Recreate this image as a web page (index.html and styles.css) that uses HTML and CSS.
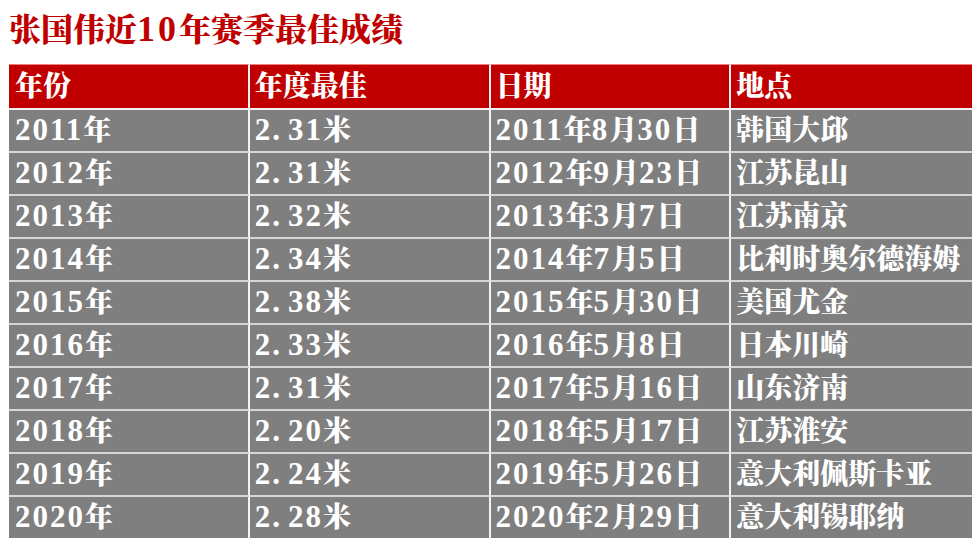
FILE: index.html
```html
<!DOCTYPE html>
<html lang="zh-CN">
<head>
<meta charset="utf-8">
<link rel="stylesheet" href="styles.css">
</head>
<body>
<h1 class="title">张国伟近<span class="tn">10</span>年赛季最佳成绩</h1>
<table class="grid">
  <thead>
    <tr><th>年份</th><th>年度最佳</th><th>日期</th><th>地点</th></tr>
  </thead>
  <tbody>
    <tr><td><span class="n">2011</span>年</td><td><span class="n">2<span class="dot">.</span>31</span>米</td><td><span class="n">2011</span>年<span class="n">8</span>月<span class="n">30</span>日</td><td>韩国大邱</td></tr>
    <tr><td><span class="n">2012</span>年</td><td><span class="n">2<span class="dot">.</span>31</span>米</td><td><span class="n">2012</span>年<span class="n">9</span>月<span class="n">23</span>日</td><td>江苏昆山</td></tr>
    <tr><td><span class="n">2013</span>年</td><td><span class="n">2<span class="dot">.</span>32</span>米</td><td><span class="n">2013</span>年<span class="n">3</span>月<span class="n">7</span>日</td><td>江苏南京</td></tr>
    <tr><td><span class="n">2014</span>年</td><td><span class="n">2<span class="dot">.</span>34</span>米</td><td><span class="n">2014</span>年<span class="n">7</span>月<span class="n">5</span>日</td><td>比利时奥尔德海姆</td></tr>
    <tr><td><span class="n">2015</span>年</td><td><span class="n">2<span class="dot">.</span>38</span>米</td><td><span class="n">2015</span>年<span class="n">5</span>月<span class="n">30</span>日</td><td>美国尤金</td></tr>
    <tr><td><span class="n">2016</span>年</td><td><span class="n">2<span class="dot">.</span>33</span>米</td><td><span class="n">2016</span>年<span class="n">5</span>月<span class="n">8</span>日</td><td>日本川崎</td></tr>
    <tr><td><span class="n">2017</span>年</td><td><span class="n">2<span class="dot">.</span>31</span>米</td><td><span class="n">2017</span>年<span class="n">5</span>月<span class="n">16</span>日</td><td>山东济南</td></tr>
    <tr><td><span class="n">2018</span>年</td><td><span class="n">2<span class="dot">.</span>20</span>米</td><td><span class="n">2018</span>年<span class="n">5</span>月<span class="n">17</span>日</td><td>江苏淮安</td></tr>
    <tr><td><span class="n">2019</span>年</td><td><span class="n">2<span class="dot">.</span>24</span>米</td><td><span class="n">2019</span>年<span class="n">5</span>月<span class="n">26</span>日</td><td>意大利佩斯卡亚</td></tr>
    <tr><td><span class="n">2020</span>年</td><td><span class="n">2<span class="dot">.</span>28</span>米</td><td><span class="n">2020</span>年<span class="n">2</span>月<span class="n">29</span>日</td><td>意大利锡耶纳</td></tr>
  </tbody>
</table>
</body>
</html>
```
FILE: styles.css
```css
html, body {
  margin: 0;
  padding: 0;
  background: #ffffff;
}
body {
  font-family: "Liberation Serif", "Noto Serif CJK SC", "Noto Sans CJK SC", serif;
}
.title {
  margin: 0;
  padding: 9px 0 0 9px;
  height: 64px;
  box-sizing: border-box;
  font-size: 32px;
  line-height: 40px;
  font-weight: 900;
  color: #c00000;
  white-space: nowrap;
}
.tn {
  font-size: 36px;
  letter-spacing: 3px;
}
.grid {
  margin-left: 9px;
  width: 963px;
  border-collapse: separate;
  border-spacing: 0;
  table-layout: fixed;
}
.grid th, .grid td {
  box-sizing: border-box;
  padding: 0 0 0 5px;
  text-align: left;
  font-weight: 900;
  color: #ffffff;
  font-size: 28px;
  white-space: nowrap;
  vertical-align: middle;
  border-right: 2px solid #f2f2f2;
}
.grid th:first-child, .grid td:first-child {
  padding-left: 6px;
}
.grid th:last-child, .grid td:last-child {
  border-right: none;
}
.grid th {
  background: #c00000;
  height: 46px;
  border-top: 1px solid #f08080;
  border-bottom: 2px solid #f2f2f2;
  line-height: 40px;
}
.grid td {
  background: #7f7f7f;
  height: 43px;
  border-bottom: 2px solid #d6d6d6;
  line-height: 40px;
}
.grid tbody tr:last-child td {
  border-bottom: none;
  height: 41px;
}
.n {
  font-size: 31px;
  letter-spacing: 2px;
}
.dot {
  letter-spacing: 8px;
}
```
